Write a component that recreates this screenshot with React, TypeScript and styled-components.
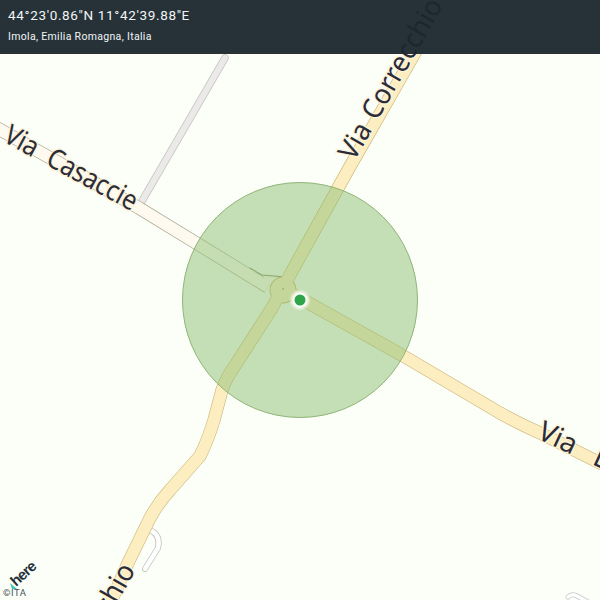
import React from "react";
import styled, { createGlobalStyle } from "styled-components";

const Global = createGlobalStyle`
  html, body { margin: 0; padding: 0; width: 600px; height: 600px; overflow: hidden; }
  #root { width: 600px; height: 600px; }
`;

const Page = styled.div`
  width: 600px;
  height: 600px;
  display: flex;
  flex-direction: column;
  background: #fbfff8;
  overflow: hidden;
`;

const Header = styled.header`
  position: relative;
  height: 54px;
  flex: none;
  box-sizing: border-box;
  padding: 6px 8px 0;
  display: flex;
  flex-direction: column;
  gap: 6px;
  background: #263238;
  color: #f2f5f5;
  font-family: "Roboto", "Liberation Sans", sans-serif;
`;

const Coordinates = styled.div`
  position: relative;
  font-size: 13.5px;
  line-height: 18px;
  letter-spacing: 0.65px;
`;

const Place = styled.div`
  position: relative;
  font-size: 10.5px;
  line-height: 13px;
  letter-spacing: 0.32px;
`;

const HeaderShadow = styled.svg`
  position: absolute;
  inset: 0;
  width: 600px;
  height: 54px;
`;

const ShadowLabel = styled.text`
  font-family: "Noto Sans", "DejaVu Sans", sans-serif;
  font-size: 28px;
  fill: #1d2630;
  word-spacing: 2px;
`;

const MapCanvas = styled.div`
  flex: 1;
  min-height: 0;
`;

const MapDrawing = styled.svg`
  display: block;
  width: 600px;
  height: 546px;
`;

const RoadLabel = styled.text<{ $gap: number }>`
  font-family: "Noto Sans", "DejaVu Sans", sans-serif;
  font-size: 28px;
  fill: #2b2c3a;
  stroke: rgba(253, 244, 216, 0.85);
  stroke-width: 3px;
  paint-order: stroke;
  word-spacing: ${(p) => p.$gap}px;
`;

const LogoText = styled.text`
  font-family: "Liberation Sans", sans-serif;
  font-weight: 700;
  font-size: 15px;
  letter-spacing: -0.8px;
  fill: #26303a;
`;

const Copyright = styled.text`
  font-family: "Roboto", sans-serif;
  font-size: 9.5px;
  fill: #46525a;
  letter-spacing: 0.5px;
`;

const mainRoad =
  "M110 604 L128 563 L150 518 Q158 503 170 490 L200 456 Q208 440 214 420 L222 390 Q226 378 236 364 L272 308 L286 282 L348 170 L428 30";
const eastRoad = "M296 296 L400 354 L500 413 Q520 424 540 433 L610 468";
const westRoad = "M-10 124 L139 208 L268 287";
const upperLabelPlace = "translate(354 162) rotate(-60.3) scale(0.95 1)";

export default function App() {
  return (
    <Page>
      <Global />
      <Header>
        <HeaderShadow viewBox="0 0 600 54">
          <ShadowLabel transform={upperLabelPlace}>Via Correcchio</ShadowLabel>
        </HeaderShadow>
        <Coordinates>44°23'0.86"N 11°42'39.88"E</Coordinates>
        <Place>Imola, Emilia Romagna, Italia</Place>
      </Header>
      <MapCanvas>
        <MapDrawing viewBox="0 54 600 546">
          <defs>
            <radialGradient id="halo">
              <stop offset="0.6" stopColor="#ffffff" stopOpacity="0.95" />
              <stop offset="1" stopColor="#ffffff" stopOpacity="0" />
            </radialGradient>
          </defs>
          <g fill="none" strokeLinecap="round" strokeLinejoin="round">
            <path d="M225 58 L142 201" stroke="#c6c6c0" strokeWidth="7.5" />
            <path d="M225 58 L142 201" stroke="#ece9e9" strokeWidth="6" />
            <path d={westRoad} stroke="#a9a58e" strokeWidth="13.2" strokeLinecap="butt" />
            <path d={westRoad} stroke="#fefaf0" strokeWidth="12" strokeLinecap="butt" />
            <path d="M262 275 L285 277 L276 292 Z" fill="#fefaf0" stroke="none" />
            <path d="M250 268 L262 275 L285 277" stroke="#8a8a68" strokeWidth="1" />
            <path d="M150 530 Q161 535 158 548 L145 569" stroke="#c2c2be" strokeWidth="6" />
            <path d="M150 530 Q161 535 158 548 L145 569" stroke="#ffffff" strokeWidth="4.4" />
            <path d="M568 597 Q572 593 577 596 L590 603" stroke="#c8c8c4" strokeWidth="5" />
            <path d="M568 597 Q572 593 577 596 L590 603" stroke="#ffffff" strokeWidth="3.4" />
            <path d={mainRoad} stroke="#c9b676" strokeWidth="13" />
            <path d={eastRoad} stroke="#c9b676" strokeWidth="13" />
            <circle cx="283" cy="290" r="13.5" fill="#c9b676" />
            <path d={mainRoad} stroke="#fdeec2" strokeWidth="11.8" />
            <path d={eastRoad} stroke="#fdeec2" strokeWidth="11.8" />
            <circle cx="283" cy="290" r="12.5" fill="#fdeec2" />
            <circle cx="283" cy="289" r="1" fill="#b9a96a" />
          </g>
          <circle cx="300" cy="300" r="117.5" fill="#8dbd72" fillOpacity="0.5" stroke="#8fb576" strokeWidth="1" />
          <circle cx="300" cy="300" r="11" fill="url(#halo)" />
          <circle cx="300" cy="300" r="5.5" fill="#2fa54a" />
          <RoadLabel $gap={8} transform="translate(2 141) rotate(28.5) scale(0.88 1)">Via Casaccie</RoadLabel>
          <RoadLabel $gap={2} transform={upperLabelPlace}>Via Correcchio</RoadLabel>
          <RoadLabel $gap={2} textAnchor="end" transform="translate(136 570) rotate(-60.3) scale(0.95 1)">Via Correcchio</RoadLabel>
          <RoadLabel $gap={14} transform="translate(536 438) rotate(25)">Via L</RoadLabel>
          <LogoText transform="translate(16 587) rotate(-42)">here</LogoText>
          <path d="M10 583 L17 589 L12 589 Z" fill="#3fc4b4" />
          <Copyright x="3" y="596">©ITA</Copyright>
        </MapDrawing>
      </MapCanvas>
    </Page>
  );
}
